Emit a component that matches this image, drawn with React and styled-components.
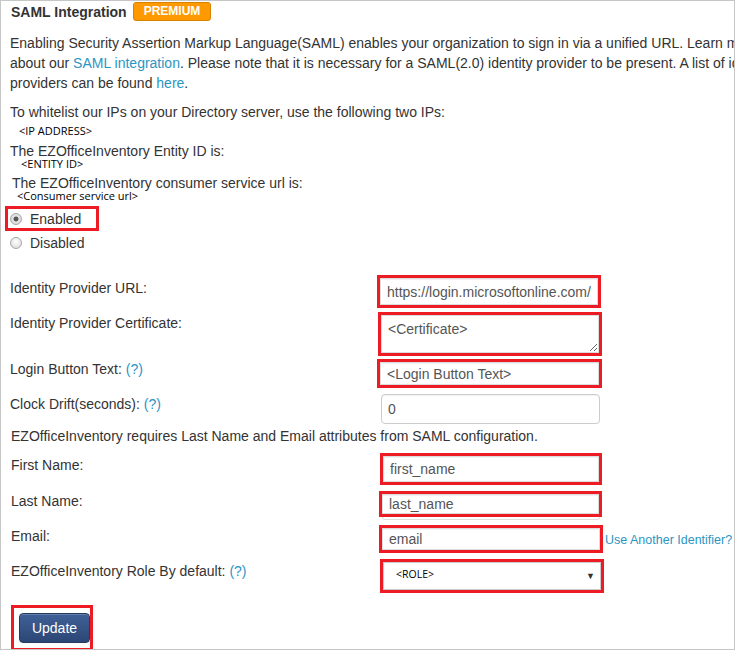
import React from 'react';
import styled, { createGlobalStyle } from 'styled-components';

const Global = createGlobalStyle`
  html, body { margin: 0; padding: 0; background: #fff; }
  body { font-family: "Liberation Sans", Arial, sans-serif; font-size: 14px; color: #333; }
  * { box-sizing: border-box; }
`;

const Frame = styled.div`
  width: 735px;
  height: 650px;
  border: 1px solid #c6c6c6;
  overflow: hidden;
  padding-left: 9px;
`;

const Header = styled.div`
  display: flex;
  align-items: center;
  height: 21px;
`;

const Title = styled.h3`
  margin: 0;
  padding-left: 1px;
  font-size: 14px;
  font-weight: bold;
  color: #333;
  line-height: 20px;
`;

const Badge = styled.span`
  margin-left: 6px;
  height: 19px;
  padding: 0 10px;
  line-height: 17px;
  background: #ff9900;
  border: 1px solid #d88300;
  border-radius: 3px;
  color: #fff;
  font-size: 12px;
  font-weight: bold;
`;

const Text = styled.div`
  margin-top: ${p => p.$mt || 0}px;
  padding-left: ${p => p.$indent || 0}px;
  line-height: ${p => p.$lh || 20}px;
  white-space: nowrap;
`;

const Code = styled.div`
  margin-top: ${p => p.$mt || 0}px;
  padding-left: ${p => p.$indent || 0}px;
  font-family: "Open Sans", "DejaVu Sans", sans-serif;
  font-size: 11px;
  line-height: 14px;
  color: #000;
  white-space: nowrap;
`;

const Link = styled.a`
  color: #2b95c3;
  text-decoration: none;
  font-size: ${p => p.$size || 14}px;
`;

const RedBox = styled.div`
  margin-top: ${p => p.$mt || 0}px;
  margin-left: ${p => p.$ml || 0}px;
  width: ${p => p.$w}px;
  height: ${p => p.$h}px;
  border: 3px solid #ed1c24;
  flex: none;
  display: flex;
  align-items: ${p => p.$align || 'stretch'};
  padding: ${p => p.$pad || '0'};
`;

const RadioLine = styled.label`
  display: flex;
  align-items: center;
  gap: 8px;
  height: 20px;
  margin-top: ${p => p.$mt || 0}px;
  padding-left: ${p => p.$indent || 0}px;
  line-height: 20px;
`;

const Radio = styled.input.attrs({ type: 'radio', readOnly: true })`
  appearance: none;
  margin: 0;
  width: 12px;
  height: 12px;
  flex: none;
  border-radius: 50%;
  border: 1px solid #a8a8a8;
  background: radial-gradient(circle at 50% 35%, #ffffff, #d6d6d6);
  &:checked {
    background: radial-gradient(circle, #5a5a5a 0 2.2px, #e6e6e6 2.8px, #cfcfcf 100%);
  }
`;

const Row = styled.div`
  display: flex;
  align-items: flex-start;
  margin-top: ${p => p.$mt || 0}px;
`;

const Label = styled.div`
  width: 367px;
  flex: none;
  padding-top: ${p => p.$pt || 0}px;
  padding-left: ${p => p.$indent || 0}px;
  line-height: 20px;
  white-space: nowrap;
`;

const Field = styled.input`
  width: 100%;
  height: 100%;
  margin: 0;
  border: 1px solid #dcdcdc;
  padding: 0 6px;
  font-family: "Liberation Sans", Arial, sans-serif;
  font-size: 14px;
  color: #555;
  background: #fff;
  outline: none;
  box-shadow: inset 0 1px 1px rgba(0, 0, 0, 0.06);
`;

const PlainField = styled(Field)`
  margin-left: ${p => p.$ml || 0}px;
  width: ${p => p.$w}px;
  height: ${p => p.$h}px;
  border: 1px solid #cccccc;
  border-radius: 4px;
  flex: none;
`;

const Area = styled.textarea`
  width: 100%;
  height: 100%;
  margin: 0;
  border: 1px solid #dcdcdc;
  padding: 4px 6px;
  font-family: "Liberation Sans", Arial, sans-serif;
  font-size: 14px;
  line-height: 18px;
  color: #555;
  resize: vertical;
  outline: none;
`;

const Underline = styled.div`
  display: flex;
  flex-direction: column;
  align-items: center;
`;

const Shadow = styled.div`
  width: 218px;
  height: 3px;
  border-radius: 0 0 4px 4px;
  border: 1px solid #e0e0e0;
  border-top: none;
  margin-left: ${p => p.$ml || 0}px;
`;

const SelectBox = styled.div`
  width: 100%;
  height: 100%;
  border: 1px solid #cccccc;
  background: #fff;
  display: flex;
  align-items: center;
  justify-content: space-between;
  padding: 0 5px 0 12px;
`;

const RoleText = styled.span`
  font-family: "Open Sans", "DejaVu Sans", sans-serif;
  font-size: 10.5px;
  color: #000;
  margin-bottom: 5px;
`;

const Arrow = styled.span`
  font-size: 9px;
  color: #333;
`;

const SideLink = styled.div`
  padding-top: 4px;
  margin-left: 2px;
  line-height: 20px;
  white-space: nowrap;
`;

const Button = styled.button`
  width: 71px;
  height: 30px;
  margin: 0;
  padding: 0;
  border: 1px solid #253b60;
  border-radius: 4px;
  background: linear-gradient(#3f6197, #2c4675);
  box-shadow: inset 0 1px 0 rgba(255, 255, 255, 0.18);
  color: #fff;
  font-family: "Liberation Sans", Arial, sans-serif;
  font-size: 14px;
`;

export default function App() {
  return (
    <>
      <Global />
      <Frame>
        <Header>
          <Title>SAML Integration</Title>
          <Badge>PREMIUM</Badge>
        </Header>

        <Text $mt={11}>
          Enabling Security Assertion Markup Language(SAML) enables your organization to sign in via a unified URL. Learn more
          <br />
          about our <Link href="#">SAML integration</Link>. Please note that it is necessary for a SAML(2.0) identity provider to be present. A list of identity
          <br />
          providers can be found <Link href="#">here</Link>.
        </Text>

        <Text $mt={9}>To whitelist our IPs on your Directory server, use the following two IPs:</Text>
        <Code $mt={2} $indent={9}>&lt;IP ADDRESS&gt;</Code>
        <Text $mt={6} $lh={14}>The EZOfficeInventory Entity ID is:</Text>
        <Code $mt={-1} $indent={11}>&lt;ENTITY ID&gt;</Code>
        <Text $mt={5} $lh={14} $indent={2}>The EZOfficeInventory consumer service url is:</Text>
        <Code $mt={-1} $indent={7}>&lt;Consumer service url&gt;</Code>

        <RedBox $mt={3} $ml={-5} $w={94} $h={25} $align="center" $pad="0 0 0 2px">
          <RadioLine>
            <Radio name="saml" defaultChecked />
            Enabled
          </RadioLine>
        </RedBox>
        <RadioLine $mt={2}>
          <Radio name="saml" />
          Disabled
        </RadioLine>

        <Row $mt={22}>
          <Label $pt={3}>Identity Provider URL:</Label>
          <RedBox $w={224} $h={33}>
            <Field defaultValue="https://login.microsoftonline.com/<TENANT ID>/saml2" />
          </RedBox>
        </Row>

        <Row $mt={4}>
          <Label $pt={1}>Identity Provider Certificate:</Label>
          <RedBox $ml={1} $w={224} $h={44}>
            <Area defaultValue="<Certificate>" />
          </RedBox>
        </Row>

        <Row $mt={3}>
          <Label>Login Button Text: <Link href="#">(?)</Link></Label>
          <RedBox $w={225} $h={29}>
            <Field defaultValue="<Login Button Text>" />
          </RedBox>
        </Row>

        <Row $mt={6}>
          <Label>Clock Drift(seconds): <Link href="#">(?)</Link></Label>
          <PlainField $ml={4} $w={219} $h={30} defaultValue="0" />
        </Row>

        <Text $mt={2} $indent={1}>EZOfficeInventory requires Last Name and Email attributes from SAML configuration.</Text>

        <Row $mt={7}>
          <Label $pt={2} $indent={1}>First Name:</Label>
          <RedBox $ml={3} $w={222} $h={32}>
            <Field defaultValue="first_name" />
          </RedBox>
        </Row>

        <Row $mt={6}>
          <Label $indent={1}>Last Name:</Label>
          <Underline>
            <RedBox $ml={2} $w={223} $h={26}>
              <Field defaultValue="last_name" />
            </RedBox>
            <Shadow $ml={2} />
          </Underline>
        </Row>

        <Row $mt={5}>
          <Label $pt={1} $indent={1}>Email:</Label>
          <RedBox $ml={2} $w={224} $h={28}>
            <Field defaultValue="email" />
          </RedBox>
          <SideLink>
            <Link href="#" $size={12.5}>Use Another Identifier?</Link>
          </SideLink>
        </Row>

        <Row $mt={6}>
          <Label $pt={2} $indent={1}>EZOfficeInventory Role By default: <Link href="#">(?)</Link></Label>
          <RedBox $ml={3} $w={224} $h={34}>
            <SelectBox>
              <RoleText>&lt;ROLE&gt;</RoleText>
              <Arrow>▼</Arrow>
            </SelectBox>
          </RedBox>
        </Row>

        <RedBox $mt={12} $ml={1} $w={82} $h={46} $align="flex-start" $pad="5px 0 0 5px">
          <Button>Update</Button>
        </RedBox>
      </Frame>
    </>
  );
}
